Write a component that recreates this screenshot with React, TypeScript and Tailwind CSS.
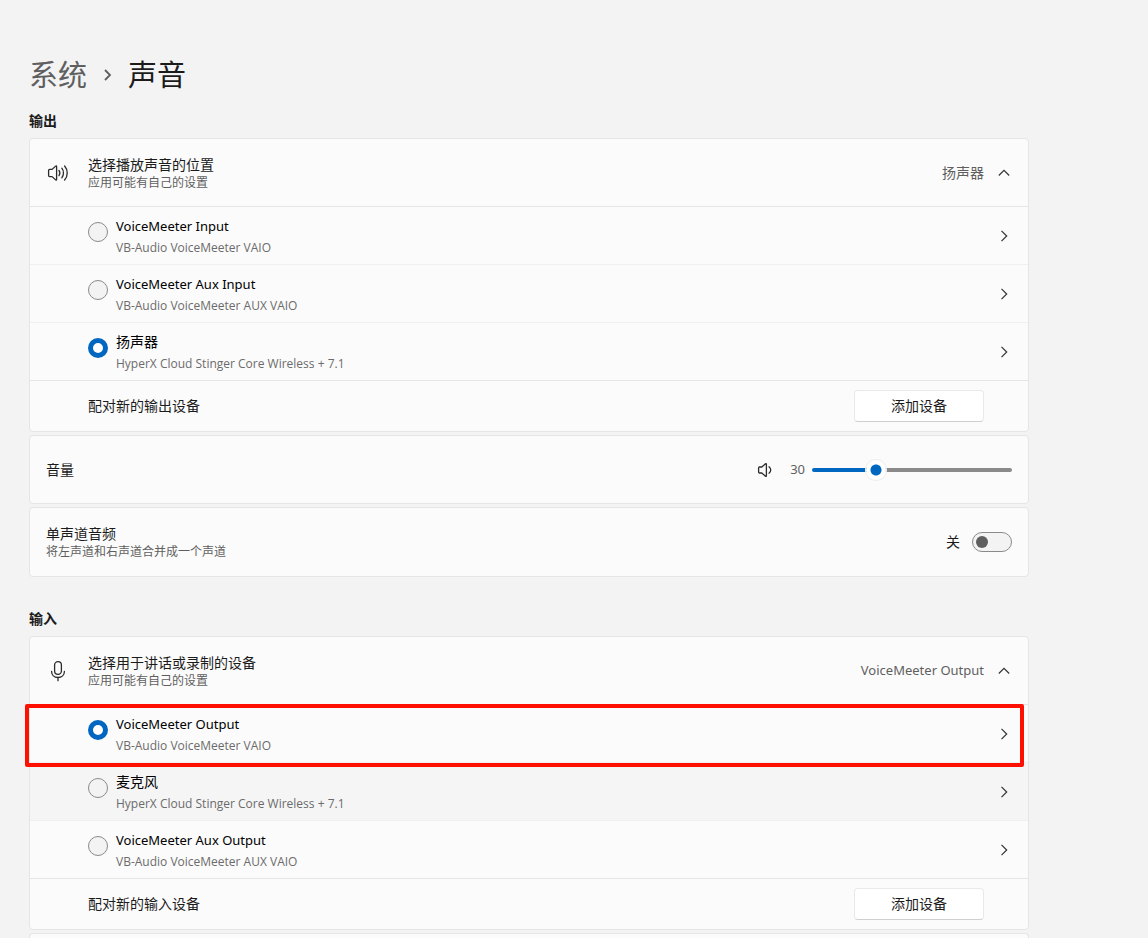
import { useState } from "react";
import type { ReactNode } from "react";

interface Device {
  id: string;
  name: string;
  detail: string;
  hovered?: boolean;
  outlined?: boolean;
}

const outputDevices: Array<Device> = [
  { id: "vm-input", name: "VoiceMeeter Input", detail: "VB-Audio VoiceMeeter VAIO" },
  { id: "vm-aux-input", name: "VoiceMeeter Aux Input", detail: "VB-Audio VoiceMeeter AUX VAIO" },
  { id: "speaker", name: "扬声器", detail: "HyperX Cloud Stinger Core Wireless + 7.1" },
];

const inputDevices: Array<Device> = [
  { id: "vm-output", name: "VoiceMeeter Output", detail: "VB-Audio VoiceMeeter VAIO", outlined: true },
  { id: "mic", name: "麦克风", detail: "HyperX Cloud Stinger Core Wireless + 7.1", hovered: true },
  { id: "vm-aux-output", name: "VoiceMeeter Aux Output", detail: "VB-Audio VoiceMeeter AUX VAIO" },
];

const nameSize = (name: string) => (/^[ -~]+$/.test(name) ? "text-[13px]" : "text-sm");

export default function App() {
  return (
    <div className="flex min-h-screen flex-col bg-[#f3f3f3] px-[29px] pt-[55px] font-['Noto_Sans','Noto_Sans_CJK_SC',sans-serif] text-sm text-[#1b1b1b]">
      <main className="flex w-full max-w-[1000px] grow flex-col">
        <Breadcrumb />
        <SectionTitle>输出</SectionTitle>
        <div className="space-y-[3px]">
          <DeviceCard
            group="output"
            title="选择播放声音的位置"
            icon={<SpeakerIcon />}
            devices={outputDevices}
            initial="speaker"
            pairLabel="配对新的输出设备"
          />
          <VolumeCard />
          <MonoCard />
        </div>
        <div className="h-4" />
        <SectionTitle>输入</SectionTitle>
        <div className="flex grow flex-col space-y-[3px]">
          <DeviceCard
            group="input"
            title="选择用于讲话或录制的设备"
            icon={<MicIcon />}
            devices={inputDevices}
            initial="vm-output"
            pairLabel="配对新的输入设备"
          />
          <div className="grow rounded-t border border-b-0 border-[#e5e5e5] bg-[#fbfbfb]" />
        </div>
      </main>
    </div>
  );
}

function Breadcrumb() {
  return (
    <nav className="flex h-10 items-center text-[29px] leading-10">
      <a href="#system" className="text-[#5f5f5f]">系统</a>
      <svg className="mx-[15px] text-[#5f5f5f]" width="11" height="14" viewBox="0 0 11 14" fill="none" stroke="currentColor" strokeWidth="1.8">
        <path d="M3 2l5 5-5 5" />
      </svg>
      <h1>声音</h1>
    </nav>
  );
}

function SectionTitle(props: { children: ReactNode }) {
  return <h2 className="mt-4 mb-[7px] leading-5 font-semibold">{props.children}</h2>;
}

interface DeviceCardProps {
  group: string;
  title: string;
  icon: ReactNode;
  devices: Array<Device>;
  initial: string;
  pairLabel: string;
}

function DeviceCard(props: DeviceCardProps) {
  const [selected, setSelected] = useState(props.initial);
  const current = props.devices.find((device) => device.id === selected);
  const currentName = current ? current.name : "";

  const makeRow = (device: Device) => {
    return (
      <DeviceRow
        key={device.id}
        group={props.group}
        device={device}
        checked={device.id === selected}
        onSelect={() => setSelected(device.id)}
      />
    );
  };

  return (
    <section className="rounded border border-[#e5e5e5] bg-[#fbfbfb]">
      <button type="button" className="flex h-17 w-full items-center border-b border-[#e5e5e5] pr-[18px] pl-4 text-left">
        <span className="mr-[18px] flex w-6 justify-center">{props.icon}</span>
        <span className="flex grow flex-col">
          <span className="leading-5">{props.title}</span>
          <span className="text-xs text-[#5f5f5f]">应用可能有自己的设置</span>
        </span>
        <span className={"mr-3.5 text-[#5f5f5f] " + nameSize(currentName)}>{currentName}</span>
        <ChevronUp />
      </button>
      <ul>{props.devices.map(makeRow)}</ul>
      <div className="flex h-[50px] items-center justify-between pr-11 pl-[58px]">
        <span>{props.pairLabel}</span>
        <button type="button" className="h-8 w-[130px] rounded border border-[#e9e9e9] border-b-[#cfcfcf] bg-white">
          添加设备
        </button>
      </div>
    </section>
  );
}

interface DeviceRowProps {
  group: string;
  device: Device;
  checked: boolean;
  onSelect: () => void;
}

function DeviceRow(props: DeviceRowProps) {
  const { device } = props;
  return (
    <li
      className={
        "relative flex h-[58px] items-center border-b border-[#f0f0f0] pr-[18px] pl-[58px] last:border-[#e5e5e5] " +
        (device.hovered ? "bg-[#f5f5f5]" : "")
      }
    >
      <label className="flex grow items-start gap-2 pt-1">
        <input
          type="radio"
          name={props.group}
          checked={props.checked}
          onChange={props.onSelect}
          className="mt-1.5 size-5 shrink-0 appearance-none rounded-full border border-[#8a8a8a] bg-[#f3f3f3] checked:border-[5px] checked:border-[#0067c0] checked:bg-white"
        />
        <span className="flex flex-col">
          <span className={"text-black " + nameSize(device.name) + " leading-5"}>{device.name}</span>
          <span className="font-['Open_Sans',sans-serif] text-xs leading-6 text-[#6b6b6b]">{device.detail}</span>
        </span>
      </label>
      <button type="button" aria-label={device.name}>
        <ChevronRight />
      </button>
      {device.outlined && (
        <div className="pointer-events-none absolute -top-px right-1 -bottom-[5px] -left-[5px] z-10 rounded-xs border-4 border-[#ff0f00]" />
      )}
    </li>
  );
}

function VolumeCard() {
  const [volume, setVolume] = useState(30);
  // The fill ends under the middle of the 20px thumb.
  const fill = `calc(10px + (100% - 20px) * ${volume / 100})`;
  return (
    <section className="flex h-[69px] items-center rounded border border-[#e5e5e5] bg-[#fbfbfb] px-4">
      <label htmlFor="volume" className="grow">音量</label>
      <VolumeIcon />
      <span className="mr-[7px] ml-[17px] text-[13px] text-[#5f5f5f]">{volume}</span>
      <input
        id="volume"
        type="range"
        value={volume}
        onChange={(e) => setVolume(Number(e.target.value))}
        style={{ backgroundImage: `linear-gradient(to right, #0067c0 ${fill}, #8a8a8a ${fill})` }}
        className="h-1 w-[200px] appearance-none rounded-full [&::-webkit-slider-thumb]:size-5 [&::-webkit-slider-thumb]:appearance-none [&::-webkit-slider-thumb]:rounded-full [&::-webkit-slider-thumb]:bg-[radial-gradient(circle,#0067c0_5px,#ffffff_6px)] [&::-webkit-slider-thumb]:shadow-[0_0_0_1px_#eeeeee]"
      />
    </section>
  );
}

function MonoCard() {
  const [mono, setMono] = useState(false);
  return (
    <section className="flex h-[70px] items-center rounded border border-[#e5e5e5] bg-[#fbfbfb] px-4">
      <label htmlFor="mono" className="flex grow flex-col">
        <span className="leading-5">单声道音频</span>
        <span className="text-xs text-[#5f5f5f]">将左声道和右声道合并成一个声道</span>
      </label>
      <span className="mr-3">{mono ? "开" : "关"}</span>
      <input
        id="mono"
        type="checkbox"
        role="switch"
        checked={mono}
        onChange={(e) => setMono(e.target.checked)}
        className="flex h-5 w-10 appearance-none items-center rounded-full border border-[#8a8a8a] bg-[#f3f3f3] px-[3px] before:size-3 before:rounded-full before:bg-[#5f5f5f] checked:justify-end checked:bg-[#0067c0] checked:before:bg-white"
      />
    </section>
  );
}

function ChevronUp() {
  return (
    <svg width="12" height="12" viewBox="0 0 12 12" fill="none" stroke="#333333" strokeWidth="1.2">
      <path d="M0.8 8.5L6 3.3l5.2 5.2" />
    </svg>
  );
}

function ChevronRight() {
  return (
    <svg width="12" height="12" viewBox="0 0 12 12" fill="none" stroke="#333333" strokeWidth="1.2">
      <path d="M3.5 0.8L8.7 6l-5.2 5.2" />
    </svg>
  );
}

function SpeakerIcon() {
  return (
    <svg width="22" height="18" viewBox="0 0 22 18" fill="none" stroke="#2b2b2b" strokeWidth="1.3" strokeLinejoin="round" strokeLinecap="round">
      <path d="M2.6 5.4h2.5L8.6 2.1c.4-.4 1-.1 1 .4v13c0 .5-.6.8-1 .4l-3.5-3.3H2.6c-.6 0-1-.4-1-1V6.400c0-.6.4-1 1-1z" />
      <path d="M12 6.400c1 1.500 1 3.700 0 5.200M14.800 4.200c2.200 2.700 2.200 6.900 0 9.600M17.600 2c3.500 3.900 3.500 10.100 0 14" />
    </svg>
  );
}

function VolumeIcon() {
  return (
    <svg width="16" height="16" viewBox="0 0 16 16" fill="none" stroke="#2b2b2b" strokeWidth="1.3" strokeLinejoin="round" strokeLinecap="round">
      <path d="M2.600 5h2.200l3.700-3.200c.4-.3.900-.1.900.4v11.600c0 .5-.5.7-.9.4L4.800 11H2.600c-.6 0-1-.4-1-1V6c0-.6.400-1 1-1z" />
      <path d="M12 4.800c2.300 1.700 2.300 4.700 0 6.400" />
    </svg>
  );
}

function MicIcon() {
  return (
    <svg width="16" height="22" viewBox="0 0 16 22" fill="none" stroke="#2b2b2b" strokeWidth="1.3" strokeLinecap="round">
      <rect x="4.600" y="1.600" width="6.800" height="12.800" rx="3.400" />
      <path d="M1.600 11.500c0 3.400 2.600 6 6.400 6s6.400-2.600 6.400-6M8 17.500v3.200" />
    </svg>
  );
}
